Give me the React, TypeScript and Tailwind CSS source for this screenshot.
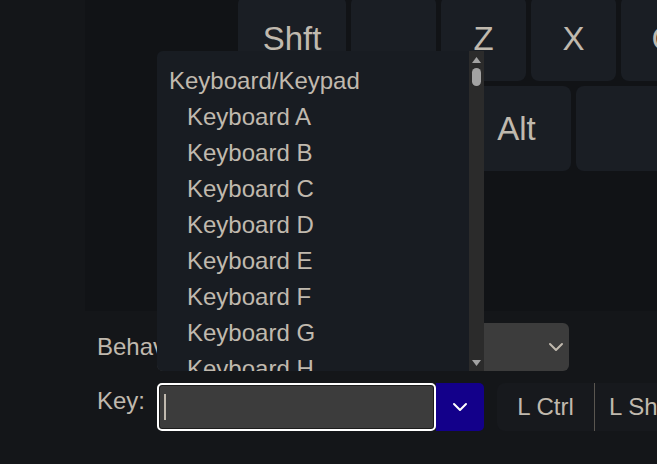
import React from 'react'

function Chevron({ className }: { className?: string }) {
    return (
        <svg width="16" height="10" viewBox="0 0 16 10" className={className} fill="none">
            <path d="M2 2l6 6 6-6" stroke="currentColor" strokeWidth="2" strokeLinecap="round" strokeLinejoin="round" />
        </svg>
    )
}

function Key({ label, w }: { label?: string; w: string }) {
    return (
        <div className={`${w} h-[85px] shrink-0 rounded-lg bg-[#1a1e24] flex items-center justify-center text-[33px]`}>
            {label}
        </div>
    )
}

const items = ['A', 'B', 'C', 'D', 'E', 'F', 'G', 'H', 'I']

export default function App() {
    return (
        <div className="relative w-[657px] h-[464px] overflow-hidden bg-[#141619] text-[#c0b9ae] font-['Liberation_Sans',Arial,sans-serif]">
            {/* keyboard panel */}
            <div className="ml-[85px] h-[311px] bg-[#111316] overflow-hidden">
                <div className="flex gap-[5px] ml-[153px] -mt-[4px]">
                    <Key label="Shft" w="w-[108px]" />
                    <Key w="w-[85px]" />
                    <Key label="Z" w="w-[85px]" />
                    <Key label="X" w="w-[85px]" />
                    <Key label="C" w="w-[85px]" />
                </div>
                <div className="flex gap-[5px] ml-[153px] mt-[5px]">
                    <Key label="Ctrl" w="w-[108px]" />
                    <Key label="Win" w="w-[106px]" />
                    <Key label="Alt" w="w-[109px]" />
                    <Key w="w-[200px]" />
                </div>
            </div>

            {/* form */}
            <div className="ml-[85px] pl-[12px] pt-[12px] flex flex-col gap-[12px] text-[24px]">
                <div className="flex items-center h-[48px]">
                    <span className="w-[60px] shrink-0 whitespace-nowrap">Behavior:</span>
                    <div className="w-[412px] shrink-0 h-[48px] rounded-md bg-[#3c3c3c] flex items-center justify-end pr-[5px]">
                        <Chevron />
                    </div>
                </div>
                <div className="flex h-[48px]">
                    <span className="w-[60px] shrink-0 self-start pt-[4px] leading-[28px]">Key:</span>
                    <div className="w-[279px] shrink-0 h-[48px] rounded-[5px] border-2 border-white bg-[#3c3c3c] shadow-[inset_0_0_0_1px_#1c1c1c] flex items-center pl-[5px]">
                        <div className="w-[2px] h-[26px] bg-[#c0b9ae]" />
                    </div>
                    <div className="w-[48px] shrink-0 h-[48px] rounded-r-[5px] bg-[#13008a] text-white flex items-center justify-center">
                        <Chevron />
                    </div>
                    <div className="ml-[13px] shrink-0 flex h-[48px] bg-[#17191d] rounded-l-lg">
                        <div className="w-[98px] shrink-0 flex items-center justify-center border-r border-[#5a5650]">L Ctrl</div>
                        <div className="flex shrink-0 items-center pl-[14px] pr-[20px] whitespace-nowrap">L Shft</div>
                    </div>
                </div>
            </div>

            {/* dropdown list */}
            <div className="absolute left-[157px] top-[51px] w-[327px] h-[320px] rounded-l-md bg-[#181c22] overflow-hidden text-[24px]">
                <div className="pt-[12px] pr-[15px]">
                    <div className="h-[36px] leading-[36px] pl-[12px]">Keyboard/Keypad</div>
                    {items.map((k) => (
                        <div key={k} className="h-[36px] leading-[36px] pl-[30px]">Keyboard {k}</div>
                    ))}
                </div>
                <div className="absolute right-0 top-0 w-[15px] h-full bg-[#2b2b2b] flex flex-col items-center">
                    <svg width="9" height="6" viewBox="0 0 9 6" className="mt-[6px]">
                        <path d="M4.5 0L9 6H0z" fill="#a3a3a3" />
                    </svg>
                    <div className="mt-[5px] w-[9px] h-[18px] rounded-full bg-[#a3a3a3]" />
                    <div className="flex-1" />
                    <svg width="9" height="6" viewBox="0 0 9 6" className="mb-[5px]">
                        <path d="M0 0h9L4.5 6z" fill="#a3a3a3" />
                    </svg>
                </div>
            </div>
        </div>
    )
}
